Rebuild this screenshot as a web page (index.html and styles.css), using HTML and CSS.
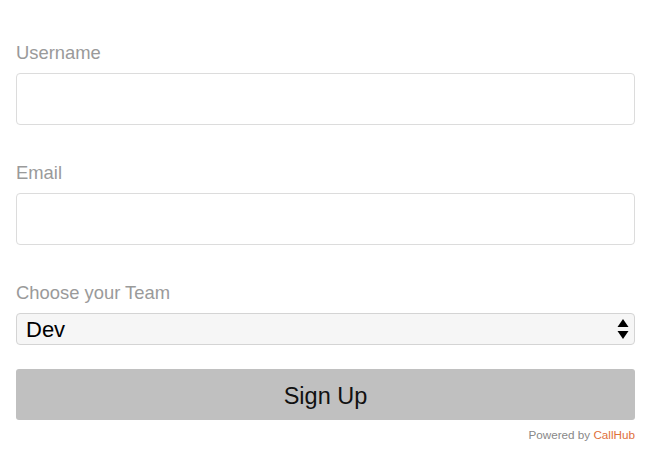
FILE: index.html
```html
<!DOCTYPE html>
<html>
<head>
<meta charset="utf-8">
<link rel="stylesheet" href="styles.css">
</head>
<body>
<form class="form">
  <label class="label">Username</label>
  <input class="input" type="text">
  <label class="label">Email</label>
  <input class="input" type="text">
  <label class="label">Choose your Team</label>
  <div class="select-wrap">
    <select class="select"><option>Dev</option></select>
    <svg class="arrows" width="12" height="22" viewBox="0 0 12 22"><path d="M6 1 L11.5 9 H0.5 Z M0.5 13 H11.5 L6 21 Z" fill="#000"/></svg>
  </div>
  <button class="button" type="button">Sign Up</button>
  <div class="powered">Powered by <span class="brand">CallHub</span></div>
</form>
</body>
</html>
```
FILE: styles.css
```css
html, body { margin: 0; padding: 0; background: #fff; }
body { font-family: "Liberation Sans", Arial, sans-serif; }
.form { display: flex; flex-direction: column; padding: 42px 15px 0 16px; width: 619px; }
.label { font-size: 18.4px; line-height: 21px; color: #9a9a9a; margin-bottom: 10px; }
.input { box-sizing: border-box; height: 52px; border: 1px solid #dcdcdc; border-radius: 4px; background: #fff; margin: 0 0 37px 0; padding: 0 10px; font-size: 18px; }
.select-wrap { position: relative; height: 32px; margin-bottom: 24px; }
.select { appearance: none; -webkit-appearance: none; box-sizing: border-box; width: 100%; height: 32px; border: 1px solid #d4d4d4; border-radius: 4px; background: #f6f6f6; font-family: "Liberation Sans", Arial, sans-serif; font-size: 22px; color: #000; padding: 0 9px; margin: 0; }
.arrows { position: absolute; right: 6px; top: 5px; }
.button { box-sizing: border-box; height: 51px; border: none; border-radius: 3px; background: #c0c0c0; font-family: "Liberation Sans", Arial, sans-serif; font-size: 23.5px; color: #111; padding: 4px 0 0 0; }
.powered { text-align: right; font-size: 11.7px; color: #888; margin-top: 8px; }
.brand { color: #e0703a; }
```
